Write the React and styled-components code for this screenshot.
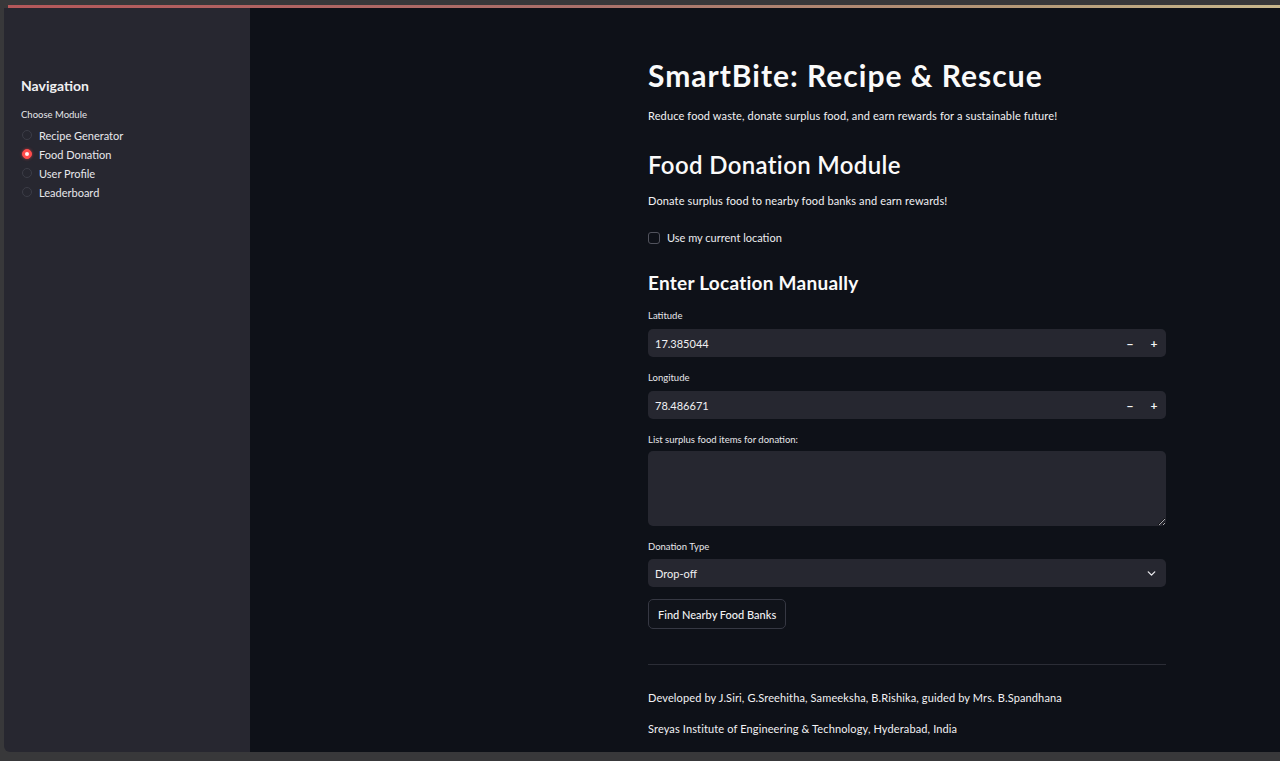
import React, { useState } from 'react'
import styled, { createGlobalStyle } from 'styled-components'
import { ChevronDown } from 'lucide-react'

const GlobalStyle = createGlobalStyle`
  html, body {
    margin: 0;
    padding: 0;
    background: #38383a;
  }
  * {
    box-sizing: border-box;
  }
`

const FONT = `'Lato', 'Noto Sans', sans-serif`

const Frame = styled.div`
  width: 1280px;
  height: 761px;
  padding: 5px 0 9px 4px;
  display: flex;
  flex-direction: column;
  font-family: ${FONT};
  color: #fafafa;
  overflow: hidden;
`

const Decoration = styled.div`
  height: 3px;
  flex-shrink: 0;
  margin-left: 4px;
  background: linear-gradient(90deg, #b5585a 0%, #a9706a 45%, #b59a78 80%, #c9b88d 100%);
`

const Body = styled.div`
  flex: 1;
  display: flex;
  min-height: 0;
`

const Sidebar = styled.aside`
  width: 246px;
  flex-shrink: 0;
  background: #272730;
  border-bottom-left-radius: 6px;
  padding: 69px 17px 0 17px;
`

const SideTitle = styled.h2`
  margin: 0 0 15px;
  font-size: 14px;
  font-weight: 700;
  color: #f0f0f2;
`

const SmallLabel = styled.div`
  font-size: 9.5px;
  color: #e6e6ea;
  margin-bottom: 8px;
`

const RadioList = styled.div`
  display: flex;
  flex-direction: column;
  gap: 5px;
`

const RadioRow = styled.label`
  display: flex;
  align-items: center;
  gap: 7px;
  height: 14px;
  font-size: 11px;
  color: #e8e8ec;
  cursor: pointer;
`

const RadioDot = styled.span`
  width: 10px;
  height: 10px;
  margin-left: 1px;
  border-radius: 50%;
  flex-shrink: 0;
  background: ${(p) => (p.checked ? '#ff4b4b' : 'transparent')};
  border: 1px solid ${(p) => (p.checked ? '#ff4b4b' : '#3c3d47')};
  box-shadow: ${(p) => (p.checked ? '0 0 3px rgba(255,75,75,0.6)' : 'none')};
  display: flex;
  align-items: center;
  justify-content: center;

  &::after {
    content: '';
    width: 4px;
    height: 4px;
    border-radius: 50%;
    background: #fff3f3;
    display: ${(p) => (p.checked ? 'block' : 'none')};
  }
`

const Main = styled.main`
  flex: 1;
  background: #0e1118;
  padding: 47px 0 0 398px;
`

const Content = styled.div`
  width: 518px;
`

const Title = styled.h1`
  margin: 0;
  font-size: 30px;
  font-weight: 700;
  line-height: 40px;
  letter-spacing: 1px;
`

const Para = styled.p`
  margin: ${(p) => p.m || '0'};
  font-size: 11px;
  line-height: 16px;
  letter-spacing: 0.13px;
  color: #f2f2f4;
`

const H2 = styled.h2`
  margin: 25px 0 0;
  font-size: 24px;
  font-weight: 600;
  line-height: 32px;
  letter-spacing: 0.35px;
`

const H3 = styled.h3`
  margin: 26px 0 0;
  font-size: 19px;
  font-weight: 700;
  line-height: 26px;
  letter-spacing: 0.25px;
`

const CheckRow = styled.label`
  display: flex;
  align-items: center;
  gap: 7px;
  margin-top: 22px;
  font-size: 11px;
  color: #ececf0;
`

const CheckBox = styled.span`
  width: 12px;
  height: 12px;
  border: 1px solid #51535d;
  border-radius: 3px;
`

const Field = styled.div`
  margin-top: ${(p) => p.mt || 0}px;
`

const FieldLabel = styled.div`
  font-size: 9.5px;
  color: #e6e6ea;
  line-height: 12px;
  margin-bottom: ${(p) => p.gap || 8}px;
`

const InputBox = styled.div`
  height: 28px;
  background: #262730;
  border-radius: 5px;
  display: flex;
  align-items: center;
  padding: 0 ${(p) => (p.select ? 8 : 0)}px 0 7px;
  font-size: 11px;
  color: #f0f0f2;
`

const Value = styled.span`
  flex: 1;
`

const Step = styled.span`
  width: 24px;
  text-align: center;
  font-size: 12px;
  font-weight: 700;
  color: #f4f4f6;
`

const TextArea = styled.textarea`
  display: block;
  width: 518px;
  height: 75px;
  background: #262730;
  border: none;
  border-radius: 5px;
  resize: vertical;
  outline: none;
  color: #f0f0f2;
  font-family: ${FONT};
  font-size: 11px;
`

const Button = styled.button`
  margin-top: 12px;
  height: 30px;
  padding: 0 9px;
  background: #10131a;
  border: 1px solid #363843;
  border-radius: 5px;
  color: #f2f2f4;
  font-family: ${FONT};
  font-size: 11px;
  font-weight: 500;
`

const Rule = styled.hr`
  margin: 35px 0 25px;
  border: none;
  border-top: 1px solid #2b2d36;
`

const modules = ['Recipe Generator', 'Food Donation', 'User Profile', 'Leaderboard']

export default function App() {
  const [module, setModule] = useState('Food Donation')

  return (
    <>
      <GlobalStyle />
      <Frame>
        <Decoration />
        <Body>
          <Sidebar>
            <SideTitle>Navigation</SideTitle>
            <SmallLabel>Choose Module</SmallLabel>
            <RadioList>
              {modules.map((m) => (
                <RadioRow key={m} onClick={() => setModule(m)}>
                  <RadioDot checked={module === m} />
                  {m}
                </RadioRow>
              ))}
            </RadioList>
          </Sidebar>
          <Main>
            <Content>
              <Title>SmartBite: Recipe &amp; Rescue</Title>
              <Para m="13px 0 0">
                Reduce food waste, donate surplus food, and earn rewards for a sustainable future!
              </Para>
              <H2>Food Donation Module</H2>
              <Para m="12px 0 0">Donate surplus food to nearby food banks and earn rewards!</Para>
              <CheckRow>
                <CheckBox />
                Use my current location
              </CheckRow>
              <H3>Enter Location Manually</H3>
              <Field mt={14}>
                <FieldLabel gap={7}>Latitude</FieldLabel>
                <InputBox>
                  <Value>17.385044</Value>
                  <Step>−</Step>
                  <Step>+</Step>
                </InputBox>
              </Field>
              <Field mt={15}>
                <FieldLabel gap={7}>Longitude</FieldLabel>
                <InputBox>
                  <Value>78.486671</Value>
                  <Step>−</Step>
                  <Step>+</Step>
                </InputBox>
              </Field>
              <Field mt={15}>
                <FieldLabel gap={5}>List surplus food items for donation:</FieldLabel>
                <TextArea />
              </Field>
              <Field mt={15}>
                <FieldLabel gap={6}>Donation Type</FieldLabel>
                <InputBox select>
                  <Value>Drop-off</Value>
                  <ChevronDown size={13} strokeWidth={2.5} color="#e8e8ec" />
                </InputBox>
              </Field>
              <Button>Find Nearby Food Banks</Button>
              <Rule />
              <Para>Developed by J.Siri, G.Sreehitha, Sameeksha, B.Rishika, guided by Mrs. B.Spandhana</Para>
              <Para m="15px 0 0">Sreyas Institute of Engineering &amp; Technology, Hyderabad, India</Para>
            </Content>
          </Main>
        </Body>
      </Frame>
    </>
  )
}
